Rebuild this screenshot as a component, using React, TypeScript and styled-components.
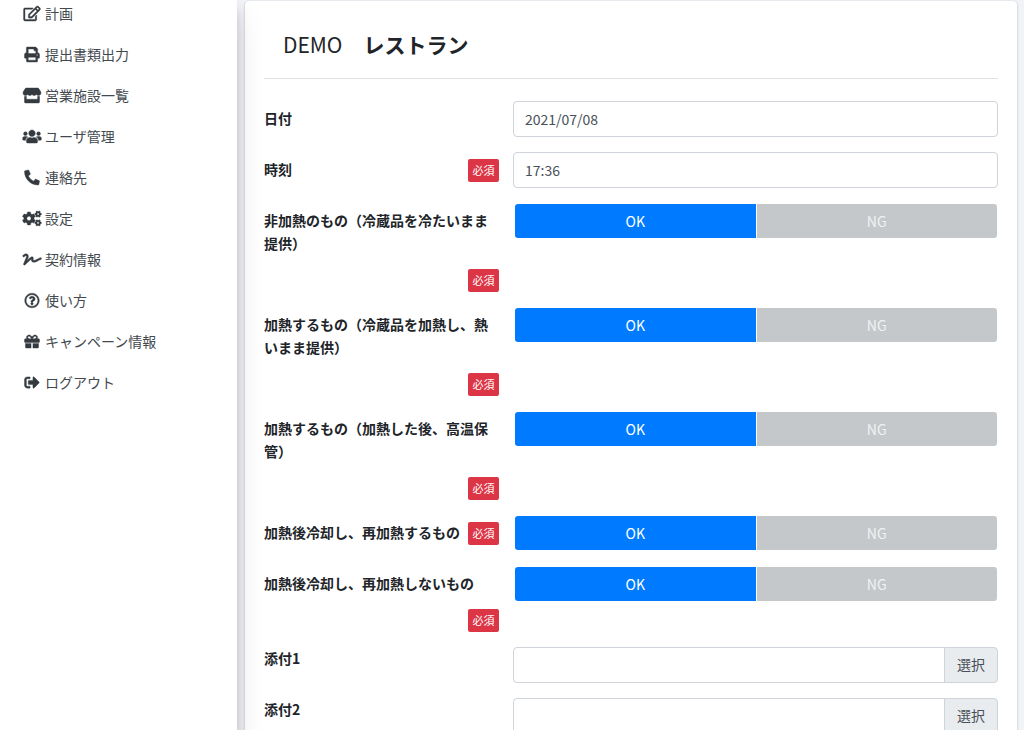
import React, { useState } from "react";
import styled, { createGlobalStyle } from "styled-components";
import {
  FaRegEdit,
  FaPrint,
  FaStore,
  FaUsers,
  FaPhoneAlt,
  FaCogs,
  FaSignature,
  FaRegQuestionCircle,
  FaGift,
  FaSignOutAlt,
} from "react-icons/fa";

const GlobalStyle = createGlobalStyle`
  *, *::before, *::after { box-sizing: border-box; }
  body {
    margin: 0;
    background: #f2f3f8;
    color: #212529;
    font-family: "Noto Sans CJK JP", sans-serif;
    font-size: 14px;
    line-height: 23px;
  }
  button, input { font: inherit; }
`;

const Layout = styled.div`
  display: flex;
  min-height: 100vh;
`;

const Sidebar = styled.nav`
  flex: 0 0 237px;
  position: relative;
  z-index: 1;
  background: #fff;
  box-shadow: 0 14px 28px rgba(0, 0, 0, 0.12), 0 10px 10px rgba(0, 0, 0, 0.14);
`;

const Menu = styled.ul`
  list-style: none;
  margin: 0;
  padding: 0 22px;
`;

const MenuItem = styled.li`
  height: 41px;
  padding-top: 2px;
`;

const MenuLink = styled.a`
  display: flex;
  align-items: center;
  gap: 3px;
  color: #43494f;
  text-decoration: none;
`;

const MenuIcon = styled.span`
  display: flex;
  color: #343a40;
  svg {
    width: 20px;
    height: 15px;
    stroke-width: 14px;
    overflow: visible;
  }
`;

const Main = styled.main`
  flex: 1;
  min-width: 0;
  padding: 1px 7px 16px 8px;
`;

const Card = styled.section`
  padding: 0 19px 24px;
  background: #fff;
  border-radius: 4px;
  box-shadow: 0 0 1px rgba(0, 0, 0, 0.13), 0 1px 3px rgba(0, 0, 0, 0.2);
`;

const Title = styled.h1`
  margin: 0 0 22px;
  padding: 27px 19px 18px;
  border-bottom: 1px solid #dfe0e2;
  font-size: 21px;
  line-height: 32px;
  font-weight: 400;
`;

const Form = styled.form`
  display: grid;
  gap: 15px;
`;

const Row = styled.div`
  display: grid;
  grid-template-columns: 235px minmax(0, 1fr);
  column-gap: 14px;
  align-items: start;
`;

const LabelCell = styled.div`
  display: flex;
  flex-wrap: wrap;
`;

const Label = styled.label<{ $flush?: boolean }>`
  padding: ${(p) => (p.$flush ? "0" : "6px 0 7px")};
  font-weight: 700;
`;

const RequiredMark = styled.span`
  width: 31px;
  height: 23px;
  margin: 7px 0 0 auto;
  border-radius: 2px;
  background: #dc3545;
  color: #fff;
  font-size: 11px;
  line-height: 22px;
  text-align: center;
`;

const TextInput = styled.input<{ $joined?: boolean }>`
  display: block;
  width: 100%;
  min-width: 0;
  height: 36px;
  padding: 0 11px;
  border: 1px solid #ced4da;
  border-radius: ${(p) => (p.$joined ? "4px 0 0 4px" : "4px")};
  background: #fff;
  color: #495057;
`;

const ToggleGroup = styled.div`
  display: flex;
  gap: 1px;
  padding: 1px 1px 1px 2px;
`;

const ToggleButton = styled.button<{ $active: boolean }>`
  flex: 1;
  height: 34px;
  padding: 0;
  border: 0;
  background: ${(p) => (p.$active ? "#007bff" : "#c4c8cb")};
  color: ${(p) => (p.$active ? "#fff" : "#f1f2f3")};
  &:first-child { border-radius: 3px 0 0 3px; }
  &:last-child { border-radius: 0 3px 3px 0; }
`;

const FileGroup = styled.div`
  display: flex;
`;

const FileButton = styled.button`
  flex: none;
  width: 54px;
  height: 36px;
  margin-left: -1px;
  padding: 0 0 2px;
  border: 1px solid #ced4da;
  border-radius: 0 4px 4px 0;
  background: #e9ecef;
  color: #495057;
`;

const menu = [
  { icon: FaRegEdit, text: "計画" },
  { icon: FaPrint, text: "提出書類出力" },
  { icon: FaStore, text: "営業施設一覧" },
  { icon: FaUsers, text: "ユーザ管理" },
  { icon: FaPhoneAlt, text: "連絡先" },
  { icon: FaCogs, text: "設定" },
  { icon: FaSignature, text: "契約情報" },
  { icon: FaRegQuestionCircle, text: "使い方" },
  { icon: FaGift, text: "キャンペーン情報" },
  { icon: FaSignOutAlt, text: "ログアウト" },
];

const checks = [
  "非加熱のもの（冷蔵品を冷たいまま提供）",
  "加熱するもの（冷蔵品を加熱し、熱いまま提供）",
  "加熱するもの（加熱した後、高温保管）",
  "加熱後冷却し、再加熱するもの",
  "加熱後冷却し、再加熱しないもの",
];

function TextRow(props: { id: string; label: string; value: string; required?: boolean }) {
  return (
    <Row>
      <LabelCell>
        <Label htmlFor={props.id}>{props.label}</Label>
        {props.required && <RequiredMark>必須</RequiredMark>}
      </LabelCell>
      <TextInput id={props.id} defaultValue={props.value} />
    </Row>
  );
}

function CheckRow({ id, label }: { id: string; label: string }) {
  const [value, setValue] = useState("OK");
  return (
    <Row>
      <LabelCell>
        <Label as="span" id={id}>{label}</Label>
        <RequiredMark>必須</RequiredMark>
      </LabelCell>
      <ToggleGroup role="group" aria-labelledby={id}>
        {["OK", "NG"].map((v) => (
          <ToggleButton
            key={v}
            type="button"
            $active={value === v}
            aria-pressed={value === v}
            onClick={() => setValue(v)}
          >
            {v}
          </ToggleButton>
        ))}
      </ToggleGroup>
    </Row>
  );
}

function FileRow({ id, label }: { id: string; label: string }) {
  return (
    <Row>
      <LabelCell>
        <Label htmlFor={id} $flush>{label}</Label>
      </LabelCell>
      <FileGroup>
        <TextInput id={id} $joined readOnly />
        <FileButton type="button">選択</FileButton>
      </FileGroup>
    </Row>
  );
}

export default function App() {
  return (
    <>
      <GlobalStyle />
      <Layout>
        <Sidebar>
          <Menu>
            {menu.map(({ icon: Icon, text }) => (
              <MenuItem key={text}>
                <MenuLink href="#">
                  <MenuIcon><Icon aria-hidden /></MenuIcon>
                  {text}
                </MenuLink>
              </MenuItem>
            ))}
          </Menu>
        </Sidebar>
        <Main>
          <Card>
            <Title>DEMO　<b>レストラン</b></Title>
            <Form>
              <TextRow id="date" label="日付" value="2021/07/08" />
              <TextRow id="time" label="時刻" value="17:36" required />
              {checks.map((label, i) => (
                <CheckRow key={label} id={`check-${i}`} label={label} />
              ))}
              <FileRow id="file-1" label="添付1" />
              <FileRow id="file-2" label="添付2" />
            </Form>
          </Card>
        </Main>
      </Layout>
    </>
  );
}
